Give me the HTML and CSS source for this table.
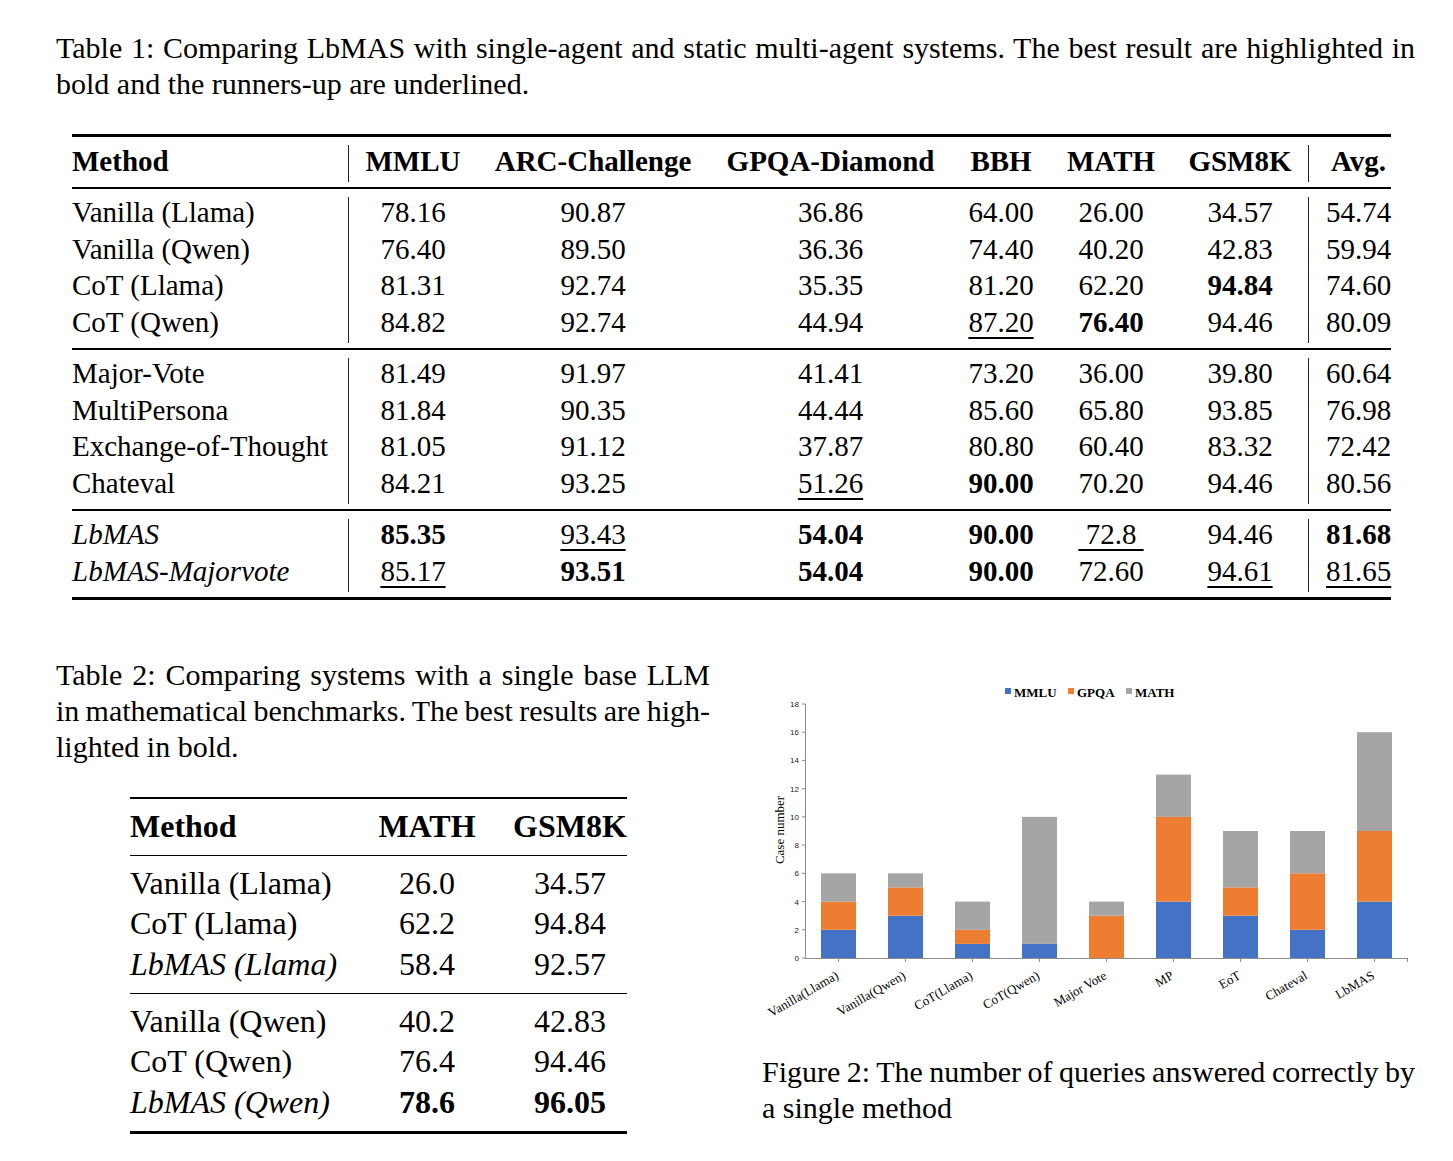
FILE: index.html
```html
<!DOCTYPE html>
<html>
<head>
<meta charset="utf-8">
<title>LbMAS tables</title>
<link rel="stylesheet" href="styles.css">
</head>
<body>
<div class="page">
  <p class="caption cap1">
    <span class="jl">Table 1: Comparing LbMAS with single-agent and static multi-agent systems. The best result are highlighted in</span>
    <span>bold and the runners-up are underlined.</span>
  </p>

  <div class="t1">
    <div class="rule heavy first"></div>
    <div class="c h m vl">Method</div><div class="c h">MMLU</div><div class="c h">ARC-Challenge</div><div class="c h">GPQA-Diamond</div><div class="c h">BBH</div><div class="c h">MATH</div><div class="c h vl">GSM8K</div><div class="c h avg">Avg.</div>
    <div class="rule light"></div>

    <div class="c m vl">Vanilla (Llama)</div><div class="c">78.16</div><div class="c">90.87</div><div class="c">36.86</div><div class="c">64.00</div><div class="c">26.00</div><div class="c vl">34.57</div><div class="c avg">54.74</div>
    <div class="c m vl">Vanilla (Qwen)</div><div class="c">76.40</div><div class="c">89.50</div><div class="c">36.36</div><div class="c">74.40</div><div class="c">40.20</div><div class="c vl">42.83</div><div class="c avg">59.94</div>
    <div class="c m vl">CoT (Llama)</div><div class="c">81.31</div><div class="c">92.74</div><div class="c">35.35</div><div class="c">81.20</div><div class="c">62.20</div><div class="c vl"><b>94.84</b></div><div class="c avg">74.60</div>
    <div class="c m vl">CoT (Qwen)</div><div class="c">84.82</div><div class="c">92.74</div><div class="c">44.94</div><div class="c"><span class="u">87.20</span></div><div class="c"><b>76.40</b></div><div class="c vl">94.46</div><div class="c avg">80.09</div>
    <div class="rule light"></div>

    <div class="c m vl">Major-Vote</div><div class="c">81.49</div><div class="c">91.97</div><div class="c">41.41</div><div class="c">73.20</div><div class="c">36.00</div><div class="c vl">39.80</div><div class="c avg">60.64</div>
    <div class="c m vl">MultiPersona</div><div class="c">81.84</div><div class="c">90.35</div><div class="c">44.44</div><div class="c">85.60</div><div class="c">65.80</div><div class="c vl">93.85</div><div class="c avg">76.98</div>
    <div class="c m vl">Exchange-of-Thought</div><div class="c">81.05</div><div class="c">91.12</div><div class="c">37.87</div><div class="c">80.80</div><div class="c">60.40</div><div class="c vl">83.32</div><div class="c avg">72.42</div>
    <div class="c m vl">Chateval</div><div class="c">84.21</div><div class="c">93.25</div><div class="c"><span class="u">51.26</span></div><div class="c"><b>90.00</b></div><div class="c">70.20</div><div class="c vl">94.46</div><div class="c avg">80.56</div>
    <div class="rule light"></div>

    <div class="c m vl"><i>LbMAS</i></div><div class="c"><b>85.35</b></div><div class="c"><span class="u">93.43</span></div><div class="c"><b>54.04</b></div><div class="c"><b>90.00</b></div><div class="c"><span class="u">&nbsp;72.8&nbsp;</span></div><div class="c vl">94.46</div><div class="c avg"><b>81.68</b></div>
    <div class="c m vl"><i>LbMAS-Majorvote</i></div><div class="c"><span class="u">85.17</span></div><div class="c"><b>93.51</b></div><div class="c"><b>54.04</b></div><div class="c"><b>90.00</b></div><div class="c">72.60</div><div class="c vl"><span class="u">94.61</span></div><div class="c avg"><span class="u">81.65</span></div>
    <div class="rule heavy last"></div>
  </div>

  <div class="bottom">
    <div class="left">
      <p class="caption">
        <span class="jl">Table 2: Comparing systems with a single base LLM</span>
        <span class="jl">in mathematical benchmarks. The best results are high-</span>
        <span>lighted in bold.</span>
      </p>
      <div class="t2">
        <div class="rule heavy first"></div>
        <div class="c h m">Method</div><div class="c h c2">MATH</div><div class="c h c3">GSM8K</div>
        <div class="rule light"></div>
        <div class="c m">Vanilla (Llama)</div><div class="c c2">26.0</div><div class="c c3">34.57</div>
        <div class="c m">CoT (Llama)</div><div class="c c2">62.2</div><div class="c c3">94.84</div>
        <div class="c m"><i>LbMAS (Llama)</i></div><div class="c c2">58.4</div><div class="c c3">92.57</div>
        <div class="rule light"></div>
        <div class="c m">Vanilla (Qwen)</div><div class="c c2">40.2</div><div class="c c3">42.83</div>
        <div class="c m">CoT (Qwen)</div><div class="c c2">76.4</div><div class="c c3">94.46</div>
        <div class="c m"><i>LbMAS (Qwen)</i></div><div class="c c2"><b>78.6</b></div><div class="c c3"><b>96.05</b></div>
        <div class="rule heavy last"></div>
      </div>
    </div>

    <div class="right">
      <svg class="chart" width="660" height="397" viewBox="0 0 660 397" xmlns="http://www.w3.org/2000/svg">
        <g class="legend">
          <rect x="243" y="31" width="6" height="6" fill="#4472c4"/>
          <text x="252" y="40">MMLU</text>
          <rect x="306" y="31" width="6" height="6" fill="#ed7d31"/>
          <text x="315" y="40">GPQA</text>
          <rect x="364" y="31" width="6" height="6" fill="#a5a5a5"/>
          <text x="373" y="40">MATH</text>
        </g>

        <g>
          <rect x="59" y="272.8" width="35" height="28.2" fill="#4472c4"/>
          <rect x="59" y="244.6" width="35" height="28.2" fill="#ed7d31"/>
          <rect x="59" y="216.3" width="35" height="28.3" fill="#a5a5a5"/>

          <rect x="126" y="258.7" width="35" height="42.3" fill="#4472c4"/>
          <rect x="126" y="230.4" width="35" height="28.3" fill="#ed7d31"/>
          <rect x="126" y="216.3" width="35" height="14.1" fill="#a5a5a5"/>

          <rect x="193" y="286.9" width="35" height="14.1" fill="#4472c4"/>
          <rect x="193" y="272.8" width="35" height="14.1" fill="#ed7d31"/>
          <rect x="193" y="244.6" width="35" height="28.2" fill="#a5a5a5"/>

          <rect x="260" y="286.9" width="35" height="14.1" fill="#4472c4"/>
          <rect x="260" y="159.9" width="35" height="127" fill="#a5a5a5"/>

          <rect x="327" y="258.7" width="35" height="42.3" fill="#ed7d31"/>
          <rect x="327" y="244.6" width="35" height="14.1" fill="#a5a5a5"/>

          <rect x="394" y="244.6" width="35" height="56.4" fill="#4472c4"/>
          <rect x="394" y="159.9" width="35" height="84.7" fill="#ed7d31"/>
          <rect x="394" y="117.6" width="35" height="42.3" fill="#a5a5a5"/>

          <rect x="461" y="258.7" width="35" height="42.3" fill="#4472c4"/>
          <rect x="461" y="230.4" width="35" height="28.3" fill="#ed7d31"/>
          <rect x="461" y="174" width="35" height="56.4" fill="#a5a5a5"/>

          <rect x="528" y="272.8" width="35" height="28.2" fill="#4472c4"/>
          <rect x="528" y="216.3" width="35" height="56.5" fill="#ed7d31"/>
          <rect x="528" y="174" width="35" height="42.3" fill="#a5a5a5"/>

          <rect x="595" y="244.6" width="35" height="56.4" fill="#4472c4"/>
          <rect x="595" y="174" width="35" height="70.6" fill="#ed7d31"/>
          <rect x="595" y="75.2" width="35" height="98.8" fill="#a5a5a5"/>
        </g>

        <g class="axis">
          <line x1="43.5" y1="47" x2="43.5" y2="301.5"/>
          <line x1="43" y1="301.5" x2="646" y2="301.5"/>
          <line x1="40" y1="301" x2="43" y2="301"/>
          <line x1="40" y1="272.8" x2="43" y2="272.8"/>
          <line x1="40" y1="244.6" x2="43" y2="244.6"/>
          <line x1="40" y1="216.3" x2="43" y2="216.3"/>
          <line x1="40" y1="188.1" x2="43" y2="188.1"/>
          <line x1="40" y1="159.9" x2="43" y2="159.9"/>
          <line x1="40" y1="131.7" x2="43" y2="131.7"/>
          <line x1="40" y1="103.4" x2="43" y2="103.4"/>
          <line x1="40" y1="75.2" x2="43" y2="75.2"/>
          <line x1="40" y1="47" x2="43" y2="47"/>
          <line x1="76.5" y1="301" x2="76.5" y2="305"/>
          <line x1="143.5" y1="301" x2="143.5" y2="305"/>
          <line x1="210.5" y1="301" x2="210.5" y2="305"/>
          <line x1="277.5" y1="301" x2="277.5" y2="305"/>
          <line x1="344.5" y1="301" x2="344.5" y2="305"/>
          <line x1="411.5" y1="301" x2="411.5" y2="305"/>
          <line x1="478.5" y1="301" x2="478.5" y2="305"/>
          <line x1="545.5" y1="301" x2="545.5" y2="305"/>
          <line x1="612.5" y1="301" x2="612.5" y2="305"/>
          <line x1="645.5" y1="301" x2="645.5" y2="305"/>
        </g>

        <g class="ytick">
          <text x="37" y="304">0</text>
          <text x="37" y="275.7">2</text>
          <text x="37" y="247.5">4</text>
          <text x="37" y="219.2">6</text>
          <text x="37" y="191">8</text>
          <text x="37" y="162.8">10</text>
          <text x="37" y="134.6">12</text>
          <text x="37" y="106.3">14</text>
          <text x="37" y="78.1">16</text>
          <text x="37" y="49.9">18</text>
        </g>

        <text class="ytitle" transform="translate(22 173) rotate(-90)">Case number</text>

        <g class="xlab">
          <text transform="translate(77.5 321) rotate(-30)">Vanilla(Llama)</text>
          <text transform="translate(144.5 321) rotate(-30)">Vanilla(Qwen)</text>
          <text transform="translate(211.5 321) rotate(-30)">CoT(Llama)</text>
          <text transform="translate(278.5 321) rotate(-30)">CoT(Qwen)</text>
          <text transform="translate(345.5 321) rotate(-30)">Major Vote</text>
          <text transform="translate(412.5 321) rotate(-30)">MP</text>
          <text transform="translate(479.5 321) rotate(-30)">EoT</text>
          <text transform="translate(546.5 321) rotate(-30)">Chateval</text>
          <text transform="translate(613.5 321) rotate(-30)">LbMAS</text>
        </g>
      </svg>
      <p class="caption">
        <span class="jl">Figure 2: The number of queries answered correctly by</span>
        <span>a single method</span>
      </p>
    </div>
  </div>
</div>
</body>
</html>
```

FILE: styles.css
```css
body {
  margin: 0;
  background: #fff;
  color: #000;
  font-family: "Liberation Serif", "Times New Roman", serif;
}

.page {
  padding: 30px 0 0 56px;
  width: 1359px;
}

.caption {
  margin: 0;
  font-size: 30px;
  line-height: 36px;
}

.caption span {
  display: block;
  white-space: nowrap;
}

.caption .jl {
  text-align: justify;
  text-align-last: justify;
  word-spacing: -5px;
}

b { font-weight: bold; }
i { font-style: italic; }

.u {
  text-decoration: underline;
  text-decoration-thickness: 1.5px;
  text-underline-offset: 5px;
}

.rule {
  grid-column: 1 / -1;
  background: #000;
}

/* Table 1 */
.t1 {
  display: grid;
  grid-template-columns: 277px 128px 232px 243px 98px 122px 137px 82px;
  width: 1319px;
  margin: 32px 0 0 16px;
  font-size: 29px;
}

.t1 .heavy { height: 2.5px; }
.t1 .first { margin-bottom: 8.5px; }
.t1 .light { height: 1.5px; margin: 5px 0 8.5px; }
.t1 .last { margin-top: 5px; }

.t1 .c {
  box-sizing: border-box;
  line-height: 31.5px;
  padding-bottom: 5px;
  text-align: center;
  white-space: nowrap;
}

.t1 .h {
  font-weight: bold;
  line-height: 32px;
}

.t1 .m { text-align: left; }
.t1 .vl { border-right: 1px solid #222; }
.t1 .avg { padding-left: 17px; }

/* Bottom section */
.bottom {
  display: flex;
  gap: 52px;
  margin-top: 57px;
}

.left { width: 654px; }
.right { width: 653px; }

/* Table 2 */
.t2 {
  display: grid;
  grid-template-columns: 229px 136px 132px;
  width: 497px;
  margin: 32px 0 0 74px;
  font-size: 32px;
}

.t2 .heavy { height: 2.5px; }
.t2 .first { margin-bottom: 9.5px; }
.t2 .light { height: 1.5px; margin: 5.5px 0 9.5px; }
.t2 .last { margin-top: 6px; }

.t2 .c {
  line-height: 35px;
  padding-bottom: 5.5px;
  text-align: center;
  white-space: nowrap;
}

.t2 .h { font-weight: bold; }
.t2 .m { text-align: left; }
.t2 .c2 { padding: 0 18px 5.5px; }
.t2 .c3 { padding-left: 18px; }

/* Chart */
.chart {
  display: block;
  overflow: visible;
}

.legend text {
  font-family: "Liberation Serif", "Times New Roman", serif;
  font-size: 13px;
  font-weight: bold;
  fill: #000;
}

.axis line {
  stroke: #8c8c8c;
  stroke-width: 1;
}

.ytick text {
  font-family: "Liberation Sans", Arial, sans-serif;
  font-size: 8px;
  fill: #222;
  text-anchor: end;
}

.ytitle {
  font-family: "Liberation Serif", "Times New Roman", serif;
  font-size: 13px;
  fill: #000;
  text-anchor: middle;
}

.xlab text {
  font-family: "Liberation Serif", "Times New Roman", serif;
  font-size: 13px;
  fill: #000;
  text-anchor: end;
}
```
